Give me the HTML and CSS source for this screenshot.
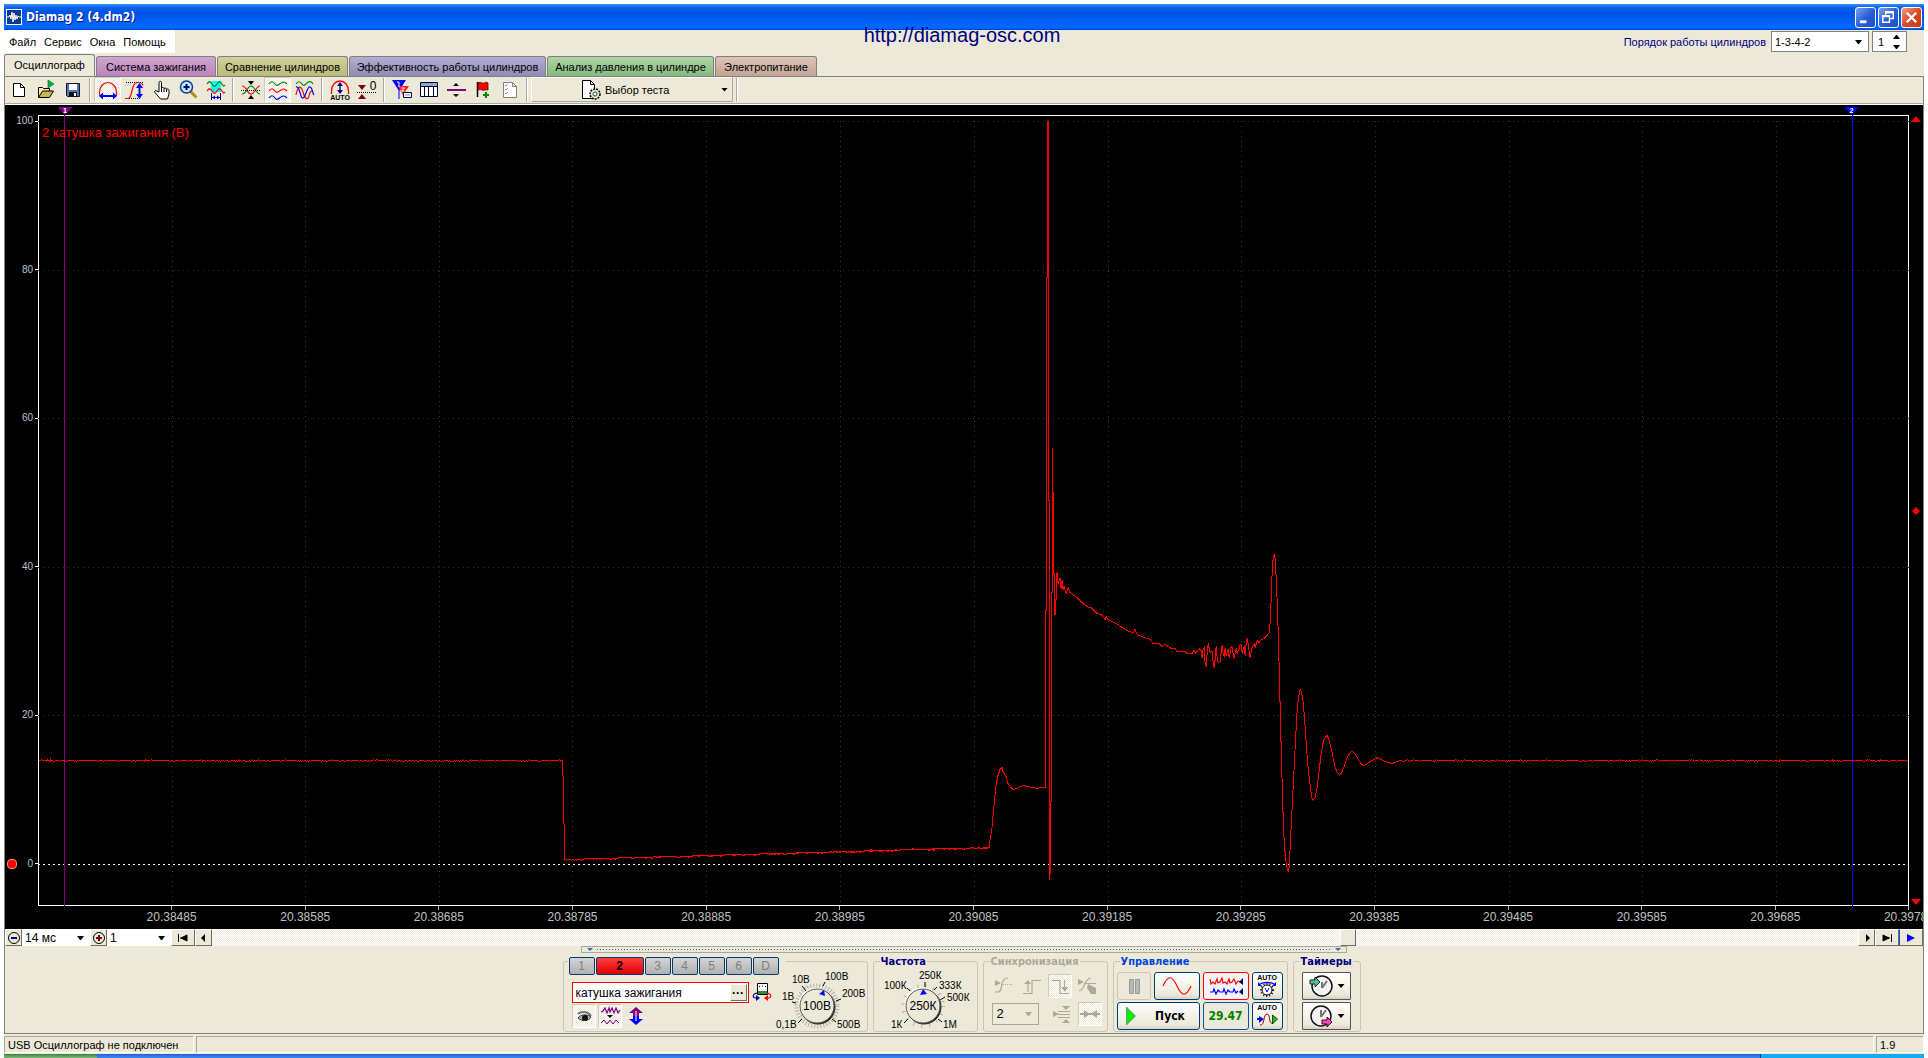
FILE: index.html
```html
<!DOCTYPE html>
<html lang="ru">
<head>
<meta charset="utf-8">
<title>Diamag 2 (4.dm2)</title>
<link rel="stylesheet" href="styles.css">
</head>
<body>
<div class="window">
  <header class="titlebar">
    <svg class="app-icon" viewBox="0 0 16 16"><rect width="16" height="16" fill="#fff"/><rect x="1" y="1" width="14" height="14" fill="#0a3a8c"/><path d="M1 8h2l1-2 1 4 1-7 1 10 1-9 1 7 1-5 1 4 1-3 1 1h2" fill="none" stroke="#fff"/></svg>
    <h1>Diamag 2 (4.dm2)</h1>
    <div class="window-buttons">
      <button type="button" class="win-btn" aria-label="Свернуть"><svg viewBox="0 0 20 20"><path d="M4 13h7v3H4z" fill="#fff"/></svg></button>
      <button type="button" class="win-btn" aria-label="Восстановить"><svg viewBox="0 0 20 20"><path d="M7 7V4h8v7h-3M7 5h8M4 8h7v7H4zM4 9h7" fill="none" stroke="#fff" stroke-width="1.5"/></svg></button>
      <button type="button" class="win-btn close" aria-label="Закрыть"><svg viewBox="0 0 20 20"><path d="M5 5l10 10M15 5L5 15" stroke="#fff" stroke-width="2.4"/></svg></button>
    </div>
  </header>
  <a class="site-link" href="#site">http://diamag-osc.com</a>

  <div class="menu-row">
    <nav class="menu">
      <a href="#file">Файл</a><a href="#service">Сервис</a><a href="#windows">Окна</a><a href="#help">Помощь</a>
    </nav>
    <div class="order">
      <label for="order">Порядок работы цилиндров</label>
      <select id="order" class="combo order-combo"><option>1-3-4-2</option></select>
      <div class="spin">
        <input id="cylinder" type="text" value="1" aria-label="Номер цилиндра">
        <svg viewBox="0 0 9 14"><path d="M4 0h1l3 4H1zM4 14h1l3-4H1z" fill="#000"/></svg>
      </div>
    </div>
  </div>

  <nav class="tabs">
    <a class="tab active" href="#osc">Осциллограф</a>
    <a class="tab ignition" href="#ignition">Система зажигания</a>
    <a class="tab compare" href="#compare">Сравнение цилиндров</a>
    <a class="tab efficiency" href="#efficiency">Эффективность работы цилиндров</a>
    <a class="tab pressure" href="#pressure">Анализ давления в цилиндре</a>
    <a class="tab power" href="#power">Электропитание</a>
  </nav>

  <div class="page">
    <div class="toolbar">
      <button type="button" aria-label="Новый"><svg viewBox="0 0 22 22"><path d="M5.500 4.500h7l4 4v9h-11zM12.500 4.500v4h4" fill="#fff" stroke="#000"/></svg></button>
      <button type="button" aria-label="Открыть"><svg viewBox="0 0 22 22"><path d="M3.500 18V8.500h4l1 1h6V12" fill="#ffe9a0" stroke="#000"/><path d="M3.500 18.500l4-6.500h11l-4 6.500z" fill="#c9b45a" stroke="#000"/><path d="M13 1l6 4-6 4z" fill="#00b33c" stroke="#006020" stroke-width=".6"/></svg></button>
      <button type="button" aria-label="Сохранить"><svg viewBox="0 0 22 22"><path d="M4.500 4.500h13v13h-12l-1-1z" fill="#5575b5" stroke="#112"/><path d="M7 5h8v6H7z" fill="#fff"/><path d="M7 13h8v4H7z" fill="#111"/><path d="M12 14h2v3h-2z" fill="#fff"/></svg></button>
      <i class="sep"></i>
      <button type="button" class="pressed" aria-label="Масштаб по времени"><svg viewBox="0 0 22 22"><path d="M7 16.500H2.500v-3c0-6 4-10 8.500-10s8.500 4 8.500 10v3H15" fill="none" stroke="#f00" stroke-width="1.200"/><path d="M3 17h16" stroke="#00f" stroke-width="2"/><path d="M6 13.500v7L2 17zM16 13.500v7l4-3.500z" fill="#00f"/></svg></button>
      <button type="button" aria-label="Масштаб по амплитуде"><svg viewBox="0 0 22 22"><path d="M2 3.500h18M5 19.500h10" stroke="#000" stroke-dasharray="1 1"/><path d="M1 19.500h3c3 0 3-4 4-8s2-8 6-8 4 1 5 3" fill="none" stroke="#f00" stroke-width="1.200"/><path d="M15.500 6v12" stroke="#00f" stroke-width="2"/><path d="M12 9h7l-3.500-5zM12 15h7l-3.500 5z" fill="#00f"/></svg></button>
      <button type="button" aria-label="Рука"><svg viewBox="0 0 22 22"><path d="M8 13V3.500c0-1.500 2.500-1.500 2.500 0V9c1-1 2.500-.5 2.500.5 1-.8 2.500-.3 2.500.7 1.200-.6 2.500 0 2.500 1.200V15l-1.500 5h-7L4 13.500c-1-1.500.6-2.500 1.800-1.500z" fill="#fff" stroke="#000"/><path d="M10.500 9v4M13 9.500V13M15.500 10v3" stroke="#000"/></svg></button>
      <button type="button" aria-label="Лупа"><svg viewBox="0 0 22 22"><path d="M12.500 12.500l6 6" stroke="#b48a20" stroke-width="3"/><circle cx="8.500" cy="8" r="6" fill="#bfe9ff" stroke="#113a8a" stroke-width="1.500"/><path d="M8.500 5v6M5.500 8h6" stroke="#000080" stroke-width="2"/></svg></button>
      <button type="button" aria-label="Фильтр"><svg viewBox="0 0 22 22"><path d="M6 2h10v11H6z" fill="#0ff"/><path d="M2 5c2-3 3-3 5 0s3 3 5 0 3-3 5 0 2 2 3 1" fill="none" stroke="#080" stroke-width="1.300"/><path d="M2 12c2-3 3-3 5 0s3 3 5 0 3-3 5 0 2 2 3 1" fill="none" stroke="#f00" stroke-width="1.300"/><path d="M6.500 14v7M15.500 14v7M7 18.500h8" stroke="#000080"/><path d="M10 16.500v4l-3-2zM12 16.500v4l3-2z" fill="#00f"/></svg></button>
      <i class="sep"></i>
      <button type="button" aria-label="Свести каналы"><svg viewBox="0 0 22 22"><path d="M8 2h6l-3 4zM8 20h6l-3-4z" fill="#000"/><path d="M2 7c5 0 5 8 9 8s5-8 9-8" fill="none" stroke="#f00" stroke-width="1.200"/><path d="M2 15c5 0 5-8 9-8s5 8 9 8" fill="none" stroke="#080" stroke-width="1.200"/><path d="M1 11.500h20" stroke="#000" stroke-dasharray="1 1"/></svg></button>
      <button type="button" class="pressed" aria-label="Раздельно"><svg viewBox="0 0 22 22" fill="none" stroke-width="1.200"><path d="M2 5c2-3 4-3 6 0s4 0 6-1 3-2 6 1" stroke="#080"/><path d="M2 12c2-3 4-3 6 0s4 0 6-1 3-2 6 1" stroke="#f00"/><path d="M2 19c2-3 4-3 6 0s4 0 6-1 3-2 6 1" stroke="#00f"/></svg></button>
      <button type="button" aria-label="Совместно"><svg viewBox="0 0 22 22" fill="none" stroke-width="1.200"><path d="M2 5c2-3 4-3 6 0s4 0 5-1 4-3 6 1" stroke="#080"/><path d="M2 16c2-10 5-10 7-3s5 9 6 4 2-5 4-5" stroke="#f00"/><path d="M2 8c4-2 4 12 7 11s4-12 7-11 2 6 4 8" stroke="#00f"/></svg></button>
      <i class="sep"></i>
      <button type="button" aria-label="Автомасштаб"><svg viewBox="0 0 22 22"><path d="M2.500 15v-3c0-6 4-10 8.500-10s8.500 4 8.500 10v3" fill="none" stroke="#f00" stroke-width="1.300"/><path d="M11 5v8" stroke="#000080" stroke-width="1.400"/><path d="M8 7h6l-3-4zM8 11h6l-3 4z" fill="#000080"/><text x="11" y="21" class="tiny">AUTO</text></svg></button>
      <button type="button" aria-label="Установить ноль"><svg viewBox="0 0 22 22"><path d="M2 6h8l-4 5zM2 20h8l-4-5z" fill="#800000"/><path d="M1 13.500h19" stroke="#000" stroke-dasharray="1 1"/><text x="17" y="11" class="zero">0</text></svg></button>
      <i class="sep"></i>
      <button type="button" aria-label="Маркеры"><svg viewBox="0 0 22 22"><path d="M1 1h14L8 12z" fill="#00f"/><path d="M7 7h11l-6 9z" fill="#f22"/><path d="M6 3h2v5M10.500 9h3l-3 3h3" fill="none" stroke="#fff"/><path d="M8 11v9" stroke="#00f"/><path d="M12.500 13.500h8v5h-8z" fill="#fff" stroke="#000060"/><path d="M14 16h5" stroke="#889"/></svg></button>
      <button type="button" aria-label="Таблица"><svg viewBox="0 0 22 22"><path d="M2.500 3.500h17v14h-17z" fill="#fff" stroke="#000030"/><path d="M3 4h16v3H3z" fill="#8ac"/><path d="M2 7.500h18M6.500 7v11M10.500 7v11M15.500 7v11" stroke="#000030"/></svg></button>
      <button type="button" aria-label="Линия"><svg viewBox="0 0 22 22"><path d="M2 10h19v2H2z" fill="#800080"/><path d="M8 7h6l-3-3zM8 15h6l-3 3z" fill="#000"/></svg></button>
      <button type="button" aria-label="Флаг"><svg viewBox="0 0 22 22"><path d="M5.500 3v15" stroke="#000" stroke-width="1.500"/><path d="M6 4c3-2 4 1 6 0s3-1 4 0v7c-3-1-4 1-6 0s-3 0-4 0z" fill="#f00" stroke="#400" stroke-width=".8"/><path d="M11 16h6M14 13v6" stroke="#080" stroke-width="2"/></svg></button>
      <button type="button" aria-label="Список"><svg viewBox="0 0 22 22" fill="none" stroke="#808080"><path d="M4.500 3.500h9l4 4v11h-13zM13.500 3.500v4h4" fill="#fff"/><path d="M6 6l1 1 2-2M6 10l1 1 2-2M6 14l1 1 2-2" stroke="#999"/></svg></button>
      <i class="sep"></i>
      <button type="button" class="test-select">
        <svg viewBox="0 0 22 22"><path d="M2.500 1.500h8l4 4v14h-12zM10.500 1.500v4h4" fill="#fff" stroke="#000"/><circle cx="15" cy="15" r="5" fill="#d5e5c8" stroke="#000" stroke-width="1.500" stroke-dasharray="2 1"/><circle cx="15" cy="15" r="2" fill="#fff" stroke="#353"/></svg>
        <span>Выбор теста</span><i class="caret"></i>
      </button>
      <i class="sep"></i>
    </div>

    <main class="chart">
      <div class="y-axis"><span>100</span><span>80</span><span>60</span><span>40</span><span>20</span><span>0</span></div>
      <div class="plot">
        <svg class="plot-svg" viewBox="38 115 1870 791" preserveAspectRatio="none">
          <g class="grid">
            <path d="M38 121.500H1908M38 270.500H1908M38 418.500H1908M38 567.500H1908M38 715.500H1908"/>
            <path d="M172.500 121V906M305.500 121V906M439.500 121V906M572.500 121V906M706.500 121V906M840.500 121V906M973.500 121V906M1107.500 121V906M1240.500 121V906M1374.500 121V906M1508.500 121V906M1641.500 121V906M1775.500 121V906"/>
          </g>
          <path class="zero-line" d="M38 864.500H1908"/>
          <path class="cursor-one" d="M64.500 115V906"/>
          <path class="cursor-two" d="M1851.500 115V906"/>
          <polyline id="trace" class="trace"/>
        </svg>
        <span class="channel-label">2 катушка зажигания (В)</span>
        <span class="flag flag-one">1</span>
        <span class="flag flag-two">2</span>
      </div>
      <div class="levels">
        <svg viewBox="0 0 10 8"><path d="M5 1l5 6H0z"/></svg>
        <svg viewBox="0 0 10 8"><path d="M5 0l4 4-4 4-4-4z"/></svg>
        <svg viewBox="0 0 10 8"><path d="M5 7l5-6H0z"/></svg>
      </div>
      <div class="x-axis"><span>20.38485</span><span>20.38585</span><span>20.38685</span><span>20.38785</span><span>20.38885</span><span>20.38985</span><span>20.39085</span><span>20.39185</span><span>20.39285</span><span>20.39385</span><span>20.39485</span><span>20.39585</span><span>20.39685</span><span>20.39785</span></div>
    </main>

    <div class="scroll-row">
      <button type="button" class="sb" aria-label="Уменьшить"><svg viewBox="0 0 14 14"><circle cx="7" cy="7" r="5.500" fill="none" stroke="#000"/><path d="M4 7h6" stroke="#000080" stroke-width="2"/></svg></button>
      <select class="combo flat time" aria-label="Развёртка"><option>14 мс</option></select>
      <button type="button" class="sb" aria-label="Увеличить"><svg viewBox="0 0 14 14"><circle cx="7" cy="7" r="5.500" fill="none" stroke="#000"/><path d="M4 7h6M7 4v6" stroke="#800000" stroke-width="2"/></svg></button>
      <select class="combo flat scale" aria-label="Масштаб"><option>1</option></select>
      <button type="button" class="sb wide" aria-label="В начало"><svg viewBox="0 0 14 14"><path d="M2.500 3v8M11 4v6L5 7zM4 7h3" fill="#000" stroke="#000"/></svg></button>
      <button type="button" class="sb" aria-label="Влево"><svg viewBox="0 0 14 14"><path d="M8 3v8L4 7z"/></svg></button>
      <div class="track"><span class="thumb"></span></div>
      <button type="button" class="sb" aria-label="Вправо"><svg viewBox="0 0 14 14"><path d="M6 3v8l4-4z"/></svg></button>
      <button type="button" class="sb wide" aria-label="В конец"><svg viewBox="0 0 14 14"><path d="M11.500 3v8M3 4v6l6-3zM7 7h3" stroke="#000"/></svg></button>
      <button type="button" class="sb wide play" aria-label="Воспроизвести"><svg viewBox="0 0 14 14"><path d="M3 3v8l8-4z" fill="#00f"/></svg></button>
    </div>

    <div class="splitter"><i></i></div>

    <div class="panel">
      <section class="group channel">
        <div class="channels">
          <button type="button">1</button><button type="button" class="current">2</button><button type="button">3</button><button type="button">4</button><button type="button">5</button><button type="button">6</button><button type="button">D</button>
        </div>
        <div class="channel-tools">
          <div class="name-row">
            <div class="name-box">
              <input type="text" value="катушка зажигания" aria-label="Имя канала">
              <button type="button" aria-label="Выбрать">···</button>
            </div>
            <svg class="probe" viewBox="0 0 20 20"><path d="M5.500 1.500h10v11h-10z" fill="#fff" stroke="#000"/><path d="M6 9h9v3H6z" fill="#2a8a3a"/><path d="M7 5l1-1M10 4h1M13 4l1 1" stroke="#000"/><path d="M5 11c-5 1-5 5 0 5" fill="none" stroke="#000080" stroke-width="1.200"/><path d="M4 13v6l4-3z" fill="#000080"/><path d="M15 11c5 1 5 5 0 5" fill="none" stroke="#f00" stroke-width="1.200"/><path d="M16 13v6l-4-3z" fill="#f00"/></svg>
          </div>
          <div class="view-row">
            <button type="button" class="tool pressed" aria-label="Показать"><svg viewBox="0 0 22 22"><path d="M5 9c3-3 10-3 13 2" fill="none" stroke="#777" stroke-width="2"/><path d="M5 13c3-4 9-4 13-1-2 4-9 5-13 1z" fill="#bbb" stroke="#333"/><circle cx="12" cy="13" r="3" fill="#111"/></svg></button>
            <button type="button" class="tool pressed" aria-label="Сглаживание"><svg viewBox="0 0 22 22"><path d="M2 7l2-1 2-3 2 5 2-5 1 4 2-4 2 5 2-5 2 5 2-3" fill="none" stroke="#800080" stroke-width="1.200"/><path d="M8 10h6l-3 3z"/><path d="M2 18l3-3 3 4 3-4 3 4 3-4 3 3" fill="none" stroke="#800080"/></svg></button>
            <button type="button" class="tool" aria-label="Сместить"><svg viewBox="0 0 22 22"><path d="M4 8l7-6 7 6h-4v3H8V8z" fill="#800080"/><path d="M4 14l7 6 7-6h-4v-3H8v3z" fill="#00f"/><path d="M11 6v10" stroke="#fff"/></svg></button>
          </div>
        </div>
        <svg class="dial" viewBox="776 970 92 61">
          <circle cx="818" cy="1006" r="20" class="fine-ticks"/>
          <path class="ticks" d="M803 1019l-4 4M797 1003l-4-1M807 991l-4-5M824 986l2-4M837 1001l5-2M833 1019l4 3"/>
          <circle cx="818" cy="1006" r="17" class="knob"/>
          <path d="M820 994l5-4 1 6z" fill="#00f"/>
          <text x="818" y="1010" class="value">100В</text>
          <text x="777" y="1028">0,1В</text><text x="783" y="1000">1В</text><text x="793" y="983">10В</text><text x="826" y="980">100В</text><text x="843" y="997">200В</text><text x="838" y="1028">500В</text>
        </svg>
      </section>

      <section class="group frequency">
        <h2>Частота</h2>
        <svg class="dial" viewBox="880 970 96 61">
          <circle cx="923" cy="1006" r="20" class="coarse-ticks"/>
          <path class="ticks" d="M908 1019l-4 4M910 991l-3-3M925 987v-5M934 990l3-3M940 1000l5-3M938 1019l4 3"/>
          <circle cx="923" cy="1006" r="17" class="knob"/>
          <path d="M920 995l3-6 4 5z" fill="#00f"/>
          <text x="923" y="1010" class="value">250К</text>
          <text x="891" y="1028">1К</text><text x="884" y="989">100К</text><text x="919" y="979">250К</text><text x="939" y="989">333К</text><text x="947" y="1001">500К</text><text x="943" y="1028">1М</text>
        </svg>
      </section>

      <section class="group sync">
        <h2>Синхронизация</h2>
        <div class="sync-row">
          <button type="button" class="tool" disabled aria-label="Уровень"><svg viewBox="0 0 22 22"><path d="M2 5l6 3-6 3z" fill="#aca899"/><path d="M2 17h3c3 0 3-3 4-8s3-6 6-6" class="off"/><path d="M8 9.500h12" class="off" stroke-dasharray="1 1"/></svg></button>
          <button type="button" class="tool" disabled aria-label="Фронт"><svg viewBox="0 0 22 22"><path d="M2 18.500h9v-13h9M7 8v9" class="off"/><path d="M3 9h7L7 5z" fill="#aca899"/></svg></button>
          <button type="button" class="tool pressed" disabled aria-label="Спад"><svg viewBox="0 0 22 22"><path d="M3 5.500h8v13h9M15.500 5v9" class="off"/><path d="M12 12h7l-3 5z" fill="#aca899"/></svg></button>
          <button type="button" class="tool" disabled aria-label="Вручную"><svg viewBox="0 0 22 22"><path d="M1 4l6 3-6 3zM11 9l8 4v6h-5l-4-6z" fill="#aca899"/><path d="M2 16c6 0 5-13 12-13M7 8.500h12" class="off"/></svg></button>
        </div>
        <div class="sync-row">
          <select class="combo sync-combo" disabled aria-label="Канал синхронизации"><option>2</option></select>
          <button type="button" class="tool" disabled aria-label="Порог"><svg viewBox="0 0 22 22"><path d="M2 8l6 3-6 3zM11 3h8l-4 4zM11 20h8l-4-4z" fill="#aca899"/><path d="M7 8.500h12M7 11.500h12M7 14.500h12" class="off"/></svg></button>
          <button type="button" class="tool pressed" disabled aria-label="Сжать"><svg viewBox="0 0 22 22"><path d="M5 7l6 4-6 4zM18 7l-6 4 6 4z" fill="#aca899"/><path d="M1 11h20" stroke="#aca899" stroke-width="2"/></svg></button>
        </div>
      </section>

      <section class="group control">
        <h2>Управление</h2>
        <div class="control-grid">
          <button type="button" class="xp" disabled aria-label="Пауза"><svg viewBox="0 0 30 24"><path d="M10.500 5.500h4v14h-4zM16.500 5.500h4v14h-4z" fill="#b8b8b8" stroke="#999"/></svg></button>
          <button type="button" class="xp" aria-label="Осциллограмма"><svg viewBox="0 0 30 24"><path d="M1 12C6 1 10 1 15 12s9 11 14 0" fill="none" stroke="#f00" stroke-width="1.200"/></svg></button>
          <button type="button" class="xp red" aria-label="Два канала"><svg class="wide-icon" viewBox="0 0 36 24"><path d="M2 5l1 5 2-2 2 2 2-5 1 4 2-1 2-4 1 5 2-1 2 2 2-5 1 4 2-1 2-3 2 5 2-3 2 1" fill="none" stroke="#f00" stroke-width="1.200"/><path d="M2 18h3l1-3 2 5 2-4 2 2h3l1-3 2 5 2-4 2 2h3l1-3 2 4 2-2" fill="none" stroke="#00f" stroke-width="1.200"/><path d="M35 4v7l-4-3zM35 14v7l-4-3z" fill="#00006a"/></svg></button>
          <button type="button" class="xp" aria-label="Автоподбор"><svg viewBox="0 0 30 24"><text x="15" y="6" class="tiny">AUTO</text><circle cx="15" cy="16" r="6" fill="none" stroke="#000" stroke-width="2" stroke-dasharray="1 2"/><circle cx="15" cy="16" r="5" fill="#fff" stroke="#000"/><path d="M13 14l2 4 2-4" fill="none" stroke="#00f"/><path d="M8 10c3-2 11-2 14 0" fill="none" stroke="#00f" stroke-width="1.300"/><path d="M6 8v4h4zM24 8v4h-4z" fill="#00f"/></svg></button>
          <button type="button" class="xp start"><svg viewBox="0 0 12 20"><path d="M1.500 1v18l9-9z" fill="#00f000" stroke="#777" stroke-width=".7"/></svg><span>Пуск</span></button>
          <output class="xp readout">29.47</output>
          <button type="button" class="xp" aria-label="Автозапуск"><svg viewBox="0 0 30 24"><text x="15" y="6" class="tiny">AUTO</text><path d="M5 15h5" stroke="#00f" stroke-width="2"/><path d="M7 12l5 3-5 4z" fill="#00f"/><path d="M8 21c5 1 3-11 7-11s1 11 6 9" fill="none" stroke="#a00000"/><path d="M20.500 11v9l5-5z" fill="#0c0" stroke="#000" stroke-width=".7"/></svg></button>
        </div>
      </section>

      <section class="group timers">
        <h2>Таймеры</h2>
        <button type="button" class="xp timer" aria-label="Таймер запуска"><svg viewBox="0 0 26 24"><circle cx="14" cy="12" r="10" fill="#f4f4f4" stroke="#111" stroke-width="1.500"/><path d="M14 14V8M14 14l5-7" stroke="#777" stroke-width="2"/><path d="M2 6h5V3l5 5-5 5v-3H2z" fill="#5bb8a0" stroke="#132"/></svg><i class="caret"></i></button>
        <button type="button" class="xp timer" aria-label="Таймер остановки"><svg viewBox="0 0 26 24"><circle cx="13" cy="12" r="10" fill="#f4f4f4" stroke="#111" stroke-width="1.500"/><path d="M13 13V6M13 13l5-7" stroke="#777" stroke-width="2"/><path d="M14 16h5v-3l5 5-5 5v-3h-5z" fill="#f4b" stroke="#402"/></svg><i class="caret"></i></button>
      </section>
    </div>
  </div>

  <footer class="status"><span class="device">USB Осциллограф не подключен</span><span class="message"></span><span class="version">1.9</span></footer>
  <div class="taskbar"><i class="start-edge"></i><i class="tray"></i></div>
</div>
<script src="trace.js"></script>
</body>
</html>
```
FILE: styles.css
```css
* { box-sizing: border-box; }
body {
  margin: 0;
  padding: 4px 4px 0;
  background: #fff;
  font: 11px/14px "Liberation Sans", Arial, sans-serif;
  color: #000;
}
button, input, select { font: inherit; color: inherit; margin: 0; padding: 0; border: 0; background: none; border-radius: 0; }
a { color: inherit; text-decoration: none; }
h1, h2 { margin: 0; }
svg { display: block; }

.window {
  position: relative;
  min-height: calc(100vh - 4px);
  display: flex;
  flex-direction: column;
  background: #ece9d8;
}

/* title bar */
.titlebar {
  height: 26px;
  display: flex;
  align-items: center;
  gap: 4px;
  padding: 0 2px;
  background: linear-gradient(#3a93ff 0, #0a62ee 3px, #0054e3 8px, #0058ee 14px, #0068ff 21px, #0066ff 24px, #0044c8 26px);
}
.app-icon { width: 16px; height: 16px; }
.titlebar h1 {
  flex: 1;
  font: bold 12px/20px "DejaVu Sans Condensed", "DejaVu Sans", sans-serif;
  color: #fff;
  text-shadow: 1px 1px #0a1883;
}
.window-buttons { display: flex; gap: 2px; }
.win-btn {
  width: 21px;
  height: 21px;
  border: 1px solid #fff;
  border-radius: 3px;
  background: linear-gradient(135deg, #7ba2f0, #2a5fd8 50%, #1f4fc4);
}
.win-btn.close { background: linear-gradient(135deg, #f0a080, #dc4a28 50%, #c03a10); }
.win-btn svg { width: 19px; height: 19px; }
.site-link {
  position: absolute;
  top: 19px;
  left: 0;
  right: 4px;
  width: fit-content;
  margin: 0 auto;
  font-size: 20px;
  line-height: 24px;
  color: #000080;
}

/* menu */
.menu-row { height: 23px; display: flex; justify-content: space-between; }
.menu { display: flex; gap: 8px; align-items: center; padding: 0 9px 0 5px; background: #fff; }
.order { display: flex; align-items: center; gap: 3px; padding-right: 17px; color: #000080; }
.combo {
  appearance: none;
  padding: 0 3px;
  border: 1px solid #808080;
  color: #000;
  background: #fff url("data:image/svg+xml,%3Csvg xmlns='http://www.w3.org/2000/svg' width='7' height='4'%3E%3Cpath d='M0 0h7L4 4H3z'/%3E%3C/svg%3E") no-repeat right 6px center;
}
.order-combo { width: 98px; height: 21px; margin-left: 2px; }
.spin { display: flex; align-items: center; width: 35px; height: 21px; padding: 0 5px; border: 1px solid #808080; background: #fff; color: #000; }
.spin input { flex: 1; width: 0; }
.spin svg { width: 9px; height: 14px; }

/* tabs */
.tabs { height: 23px; display: flex; align-items: flex-end; gap: 1px; padding-top: 1px; }
.tab {
  height: 20px;
  padding-top: 3px;
  border: 1px solid #808080;
  border-bottom: 0;
  border-radius: 3px 3px 0 0;
  text-align: center;
  white-space: nowrap;
}
.tab.active { flex: 0 0 91px; height: 22px; }
.ignition { flex: 0 0 120px; background: linear-gradient(#d0a5d0, #ba84ba); }
.compare { flex: 0 0 131px; background: linear-gradient(#d0d09c, #baba78); }
.efficiency { flex: 0 0 197px; background: linear-gradient(#b2aed0, #918cb6); }
.pressure { flex: 0 0 167px; background: linear-gradient(#aed4a8, #88ba80); }
.power { flex: 0 0 102px; background: linear-gradient(#dcc4b8, #c4a494); }

.page {
  flex: 1;
  display: flex;
  flex-direction: column;
  border: 1px solid #808080;
  border-top: 0;
  min-width: 0;
}

/* toolbar */
.toolbar {
  display: flex;
  align-items: center;
  height: 29px;
  padding-bottom: 2px;
  border-top: 1px solid #808080;
  border-bottom: 1px solid #fff;
  box-shadow: inset 0 -1px #aca899;
}
.toolbar button { flex: none; width: 27px; height: 25px; display: flex; align-items: center; justify-content: center; }
.toolbar svg { width: 22px; height: 22px; }
.sep { flex: none; width: 2px; height: 24px; margin: 0 3px; border-left: 1px solid #aca899; border-right: 1px solid #fff; }
.toolbar .pressed, .tool.pressed {
  background: repeating-conic-gradient(#fff 0 25%, #ece9d8 0 50%) 0 0 / 2px 2px;
  border: 1px solid;
  border-color: #d0ccbc #fff #fff #d0ccbc;
}
.toolbar .test-select {
  width: 202px;
  gap: 3px;
  padding-left: 48px;
  justify-content: flex-start;
  border: 1px solid;
  border-color: #fff #aca899 #aca899 #fff;
}
.test-select span { flex: 1; text-align: left; }
.caret { width: 7px; height: 4px; background: #000; clip-path: polygon(0 0, 100% 0, 50% 100%); }
.test-select .caret { margin-right: 4px; }
.tiny { font: bold 7px "Liberation Sans", sans-serif; text-anchor: middle; }
.zero { font: 12px "Liberation Sans", sans-serif; text-anchor: middle; }

/* chart */
.chart {
  flex: 1;
  display: grid;
  grid-template-columns: 33px 1fr 14px;
  grid-template-rows: 10px 1fr 23px;
  min-height: 400px;
  overflow: hidden;
  background: #000;
  color: #c0c0c0;
}
.y-axis {
  grid-area: 2 / 1;
  display: flex;
  flex-direction: column;
  justify-content: space-between;
  align-items: flex-end;
  padding-bottom: 36px;
  font-size: 10px;
  line-height: 12px;
}
.y-axis span { display: flex; align-items: center; gap: 2px; }
.y-axis span::after { content: ""; width: 3px; height: 1px; background: #fff; }
.y-axis span:last-child { position: relative; }
.y-axis span:last-child::before {
  content: "";
  position: absolute;
  right: 21px;
  width: 8px;
  height: 8px;
  border-radius: 4px;
  background: #f00;
  border: 1px solid #f88;
}
.plot { grid-area: 2 / 2; position: relative; border: 1px solid #fff; }
.plot-svg { position: absolute; inset: -1px; width: calc(100% + 2px); height: calc(100% + 2px); }
.plot-svg path, .plot-svg polyline { fill: none; stroke-width: 1px; vector-effect: non-scaling-stroke; shape-rendering: crispEdges; }
.grid path { stroke: #3c3c14; stroke-dasharray: 1 4; }
.zero-line { stroke: #fff; stroke-dasharray: 2 3; }
.cursor-one { stroke: #800080; }
.cursor-two { stroke: #0000ff; }
.plot-svg .trace { stroke: #f00; }
.channel-label { position: absolute; left: 3px; top: 9px; font-size: 13px; line-height: 16px; color: #f00; }
.flag {
  position: absolute;
  top: -9px;
  width: 15px;
  height: 8px;
  margin-left: -8px;
  font: bold 7px/7px "Liberation Sans", sans-serif;
  text-align: center;
  color: #fff;
  clip-path: polygon(0 0, 100% 0, 50% 100%);
}
.flag-one { left: 1.42%; background: #800080; }
.flag-two { left: 97%; background: #00f; }
.levels { grid-area: 2 / 3; display: flex; flex-direction: column; justify-content: space-between; align-items: center; }
.levels svg { width: 10px; height: 8px; fill: #f00; }
.x-axis { grid-area: 3 / 2; display: grid; grid-template-columns: repeat(14, 1fr); margin-left: 3.57%; margin-right: -3.57%; font-size: 12px; }
.x-axis span { text-align: center; }
.x-axis span::before { content: ""; display: block; width: 1px; height: 4px; margin: 0 auto; background: #c0c0c0; }

/* scroll row */
.scroll-row { display: flex; height: 17px; background: #fff; }
.sb, .thumb {
  flex: none;
  width: 17px;
  height: 17px;
  display: flex;
  align-items: center;
  justify-content: center;
  background: #ece9d8;
  border: 1px solid;
  border-color: #fff #716f64 #716f64 #fff;
}
.sb.wide { width: 24px; }
.sb svg { width: 14px; height: 14px; }
.play { border-left-color: #0054e3; }
.combo.flat { border: 0; height: 17px; font-size: 12px; }
.time { width: 68px; }
.scale { width: 64px; }
.track { flex: 1; background: repeating-conic-gradient(#fff 0 25%, #ece9d8 0 50%) 0 0 / 2px 2px; }
.thumb { margin-left: 68.500%; width: 16px; }

/* bottom panel */
.splitter { display: flex; align-items: center; align-self: center; gap: 4px; width: 766px; height: 7px; padding: 2px 5px; border: 1px solid #aca899; }
.splitter i { flex: 1; height: 1px; background: repeating-linear-gradient(90deg, #316ac5 0 1px, transparent 1px 3px); }
.splitter::before, .splitter::after { content: ""; width: 6px; height: 3px; background: #316ac5; clip-path: polygon(0 0, 100% 0, 50% 100%); }
.panel { display: flex; justify-content: center; gap: 5px; padding: 8px 5px 1px 0; }
.group { height: 71px; border: 1px solid #c9c6b6; border-radius: 3px; }
.group h2 {
  width: fit-content;
  margin: -7px 0 0 6px;
  padding: 0 1px;
  background: #ece9d8;
  font: bold 11px/14px "DejaVu Sans Condensed", "DejaVu Sans", sans-serif;
  color: #000080;
}
.channel { display: grid; grid-template: 14px 1fr / 207px 92px; padding-left: 4px; }
.channels {
  grid-column: 1 / 3;
  display: flex;
  gap: 1px;
  width: 218px;
  height: 18px;
  margin-top: -5px;
  padding-left: 1px;
  background: #ece9d8;
}
.channels button {
  width: 26px;
  border: 1px solid #003c74;
  border-radius: 2px;
  background: linear-gradient(#d4d4d4, #b0b0b0);
  color: #808080;
  font-size: 12px;
}
.channels .current { width: 48px; background: linear-gradient(#ff4040, #e00000); color: #000; font-weight: bold; }
.channel-tools { padding: 6px 0 0 4px; font-size: 12px; }
.name-row { display: flex; gap: 3px; }
.name-box { display: flex; width: 177px; height: 21px; padding: 1px; border: 1px solid #f00; background: #fff; }
.name-box input { flex: 1; width: 0; padding-left: 2px; font-size: 12px; }
.name-box button { width: 17px; background: #ece9d8; border: 1px solid; border-color: #fff #716f64 #716f64 #fff; font-weight: bold; line-height: 12px; }
.probe { width: 20px; height: 20px; }
.view-row { display: flex; gap: 2px; padding-top: 1px; }
.tool { width: 24px; height: 24px; display: flex; align-items: center; justify-content: center; }
.tool svg { flex: none; width: 22px; height: 22px; }
.dial { height: 61px; font: 10px "Liberation Sans", sans-serif; }
.channel .dial { width: 92px; margin-top: -6px; }
.frequency { width: 105px; }
.frequency h2 { margin-bottom: 1px; }
.frequency .dial { width: 96px; margin-left: 6px; }
.dial .value { font-size: 12px; text-anchor: middle; }
.fine-ticks { fill: none; stroke: #b4b0a0; stroke-width: 5px; stroke-dasharray: 1 2; }
.coarse-ticks { fill: none; stroke: #b4b0a0; stroke-width: 4px; stroke-dasharray: 1 7; }
.ticks { stroke: #000; fill: none; }
.knob { fill: #ece9d8; stroke: #555; stroke-width: 1px; filter: drop-shadow(1px 1px 0 #222) drop-shadow(-1px -1px 0 #fff); }

.sync { width: 125px; }
.sync h2 { color: #aca899; }
.sync-row { display: flex; align-items: center; gap: 4px; height: 28px; padding-left: 8px; }
.sync-row:nth-child(2) { margin-top: 3px; }
.off { fill: none; stroke: #aca899; stroke-width: 1.2px; }
.combo.sync-combo {
  width: 47px;
  height: 22px;
  padding-left: 4px;
  margin-right: 7px;
  border-color: #aca899;
  opacity: 1;
  font-size: 13px;
  background-color: #ece9d8;
  background-image: url("data:image/svg+xml,%3Csvg xmlns='http://www.w3.org/2000/svg' width='7' height='4'%3E%3Cpath d='M0 0h7L4 4H3z' fill='%23aca899'/%3E%3C/svg%3E");
}

.control { width: 175px; }
.control h2 { color: #0046d5; }
.control-grid { display: grid; grid-template: 28px 28px / 34px 46px 46px 31px; gap: 2px 3px; padding: 3px 0 0 3px; }
.xp {
  display: flex;
  align-items: center;
  justify-content: center;
  border: 1px solid #003c74;
  border-radius: 3px;
  background: linear-gradient(#fff, #ece9d8 85%, #d6d0c5);
}
.xp svg { flex: none; width: 30px; height: 24px; }
.xp svg.wide-icon { width: 36px; }
.xp:disabled { border-color: #c9c7ba; background: #ece9d8; }
.xp.red { border-color: #f00; background: #f4f2fa; }
.start { grid-column: span 2; font: bold 12px/14px "DejaVu Sans Condensed", sans-serif; gap: 18px; padding-right: 6px; }
.xp.start svg { width: 12px; height: 20px; }
.readout { background: #ece9d8; border-color: #0054a8; color: #008000; font: bold 12px/14px "DejaVu Sans Condensed", sans-serif; }

.timers { width: 68px; }
.timer { width: 49px; height: 28px; margin: 2px 0 0 8px; gap: 4px; border-color: #555; border-radius: 1px; }
.timers h2 + .timer { margin-top: 3px; }
.timer svg { width: 26px; height: 24px; }

/* status bar */
.status { display: flex; gap: 2px; height: 20px; padding: 2px 0 1px; }
.status span { border: 1px solid; border-color: #aca899 #fff #fff #aca899; padding: 1px 3px; white-space: nowrap; }
.device { width: 190px; }
.message { flex: 1; }
.version { width: 48px; }
.taskbar { height: 4px; display: flex; justify-content: space-between; background: linear-gradient(#245edb, #3f8cf3); }
.start-edge { width: 93px; border-radius: 0 3px 0 0; background: linear-gradient(#388638, #7dba7d); }
.tray { width: 164px; border-left: 1px solid #083a80; background: #18a8f0; }
```
FILE: trace.js
```js
// Builds the coil voltage trace: one vertex per sample, flat parts carry ADC jitter.
(function () {
  var points = [];
  var seed = 7;
  function jitter() {
    seed = (seed * 1103515245 + 12345) % 2147483648;
    var r = seed / 2147483648;
    return r < 0.2 ? 1 : r > 0.96 ? -1 : 0;
  }
  function flat(x0, x1, y0, y1) {
    for (var x = x0; x <= x1; x++) {
      points.push([x + 0.5, Math.round(y0 + (y1 - y0) * (x - x0) / (x1 - x0)) + jitter() + 0.5]);
    }
  }
  // Fast events, in thirds of a unit from the origin (980, 500).
  function burst(list) {
    list.forEach(function (p) {
      points.push([Math.floor(980 + p[0] / 3) + 0.5, Math.round(500 + p[1] / 3) + 0.5]);
    });
  }

  flat(38, 561, 760, 760);
  points.push([562.5, 760.5], [562.5, 775.5], [563.5, 776.5], [563.5, 823.5], [564.5, 824.5], [564.5, 859.5]);
  flat(565, 987, 859, 847);
  burst([
    [25, 1040], [29, 1020], [34, 980], [40, 915], [46, 855], [52, 825], [58, 806], [64, 802], [68, 812],
    [75, 828], [82, 850], [90, 862], [97, 867], [108, 865], [118, 857], [130, 854], [140, 858], [155, 861],
    [170, 864], [180, 861], [193, 862], [193, 330], [196, 330], [196, -670], [199, -670], [199, -1137],
    [202, -1137], [202, 0], [205, 0], [205, 1137], [208, 1118], [208, 903], [211, 903], [211, 275],
    [214, 275], [214, -157], [217, -21], [217, 218], [220, 218], [220, 332], [223, 342], [223, 297],
    [226, 297], [226, 237], [229, 215], [232, 250], [235, 240], [238, 235], [241, 264], [244, 240],
    [247, 268], [250, 258], [256, 278], [262, 262], [268, 275], [280, 285], [292, 293], [310, 312],
    [325, 322], [332, 322], [348, 340], [360, 342], [372, 356], [376, 349], [382, 358], [400, 366],
    [412, 373], [425, 382], [445, 392], [458, 397], [464, 388], [470, 402], [485, 408], [500, 414],
    [508, 417], [518, 428], [535, 429], [545, 438], [552, 433], [570, 444], [582, 445], [590, 452],
    [612, 452], [618, 460], [634, 458], [640, 450], [643, 460], [648, 452], [655, 445], [660, 450],
    [664, 472], [668, 446], [670, 441], [674, 490], [677, 497], [680, 460], [682, 430], [688, 456],
    [694, 454], [697, 487], [700, 500], [703, 478], [706, 438], [709, 470], [712, 486], [718, 482],
    [721, 455], [724, 436], [727, 455], [730, 467], [733, 445], [736, 464], [742, 448], [745, 470],
    [748, 460], [751, 438], [754, 440], [757, 460], [760, 473], [766, 445], [769, 460], [775, 443],
    [779, 433], [782, 433], [785, 458], [790, 438], [793, 466], [796, 430], [799, 415], [802, 428],
    [805, 450], [808, 470], [811, 455], [814, 440], [820, 428], [823, 440], [829, 419], [835, 425],
    [841, 418], [850, 414], [859, 406], [865, 395], [868, 366], [871, 297], [874, 216], [877, 174],
    [880, 162], [883, 174], [886, 230], [889, 300], [892, 390], [895, 500], [898, 620], [901, 740],
    [904, 850], [907, 950], [910, 1020], [913, 1060], [916, 1090], [919, 1104], [922, 1112], [925, 1100],
    [928, 1040], [931, 980], [934, 920], [937, 860], [940, 800], [943, 740], [946, 680], [949, 630],
    [952, 600], [955, 578], [958, 568], [961, 572], [964, 585], [967, 605], [970, 640], [973, 680],
    [976, 725], [979, 770], [982, 803], [985, 830], [988, 855], [991, 880], [994, 893], [997, 899],
    [1003, 890], [1009, 860], [1015, 810], [1021, 760], [1027, 725], [1033, 711], [1039, 706],
    [1045, 720], [1051, 745], [1057, 770], [1063, 800], [1069, 815], [1075, 821], [1081, 818],
    [1090, 798], [1099, 772], [1108, 756], [1114, 754], [1126, 764], [1135, 782], [1147, 796],
    [1156, 793], [1168, 784], [1180, 777], [1189, 772], [1200, 777], [1213, 783], [1234, 789], [1258, 779]
  ]);
  flat(1402, 1907, 760, 760);

  document.getElementById('trace').setAttribute('points', points.map(function (p) {
    return p.join(',');
  }).join(' '));
}());
```
